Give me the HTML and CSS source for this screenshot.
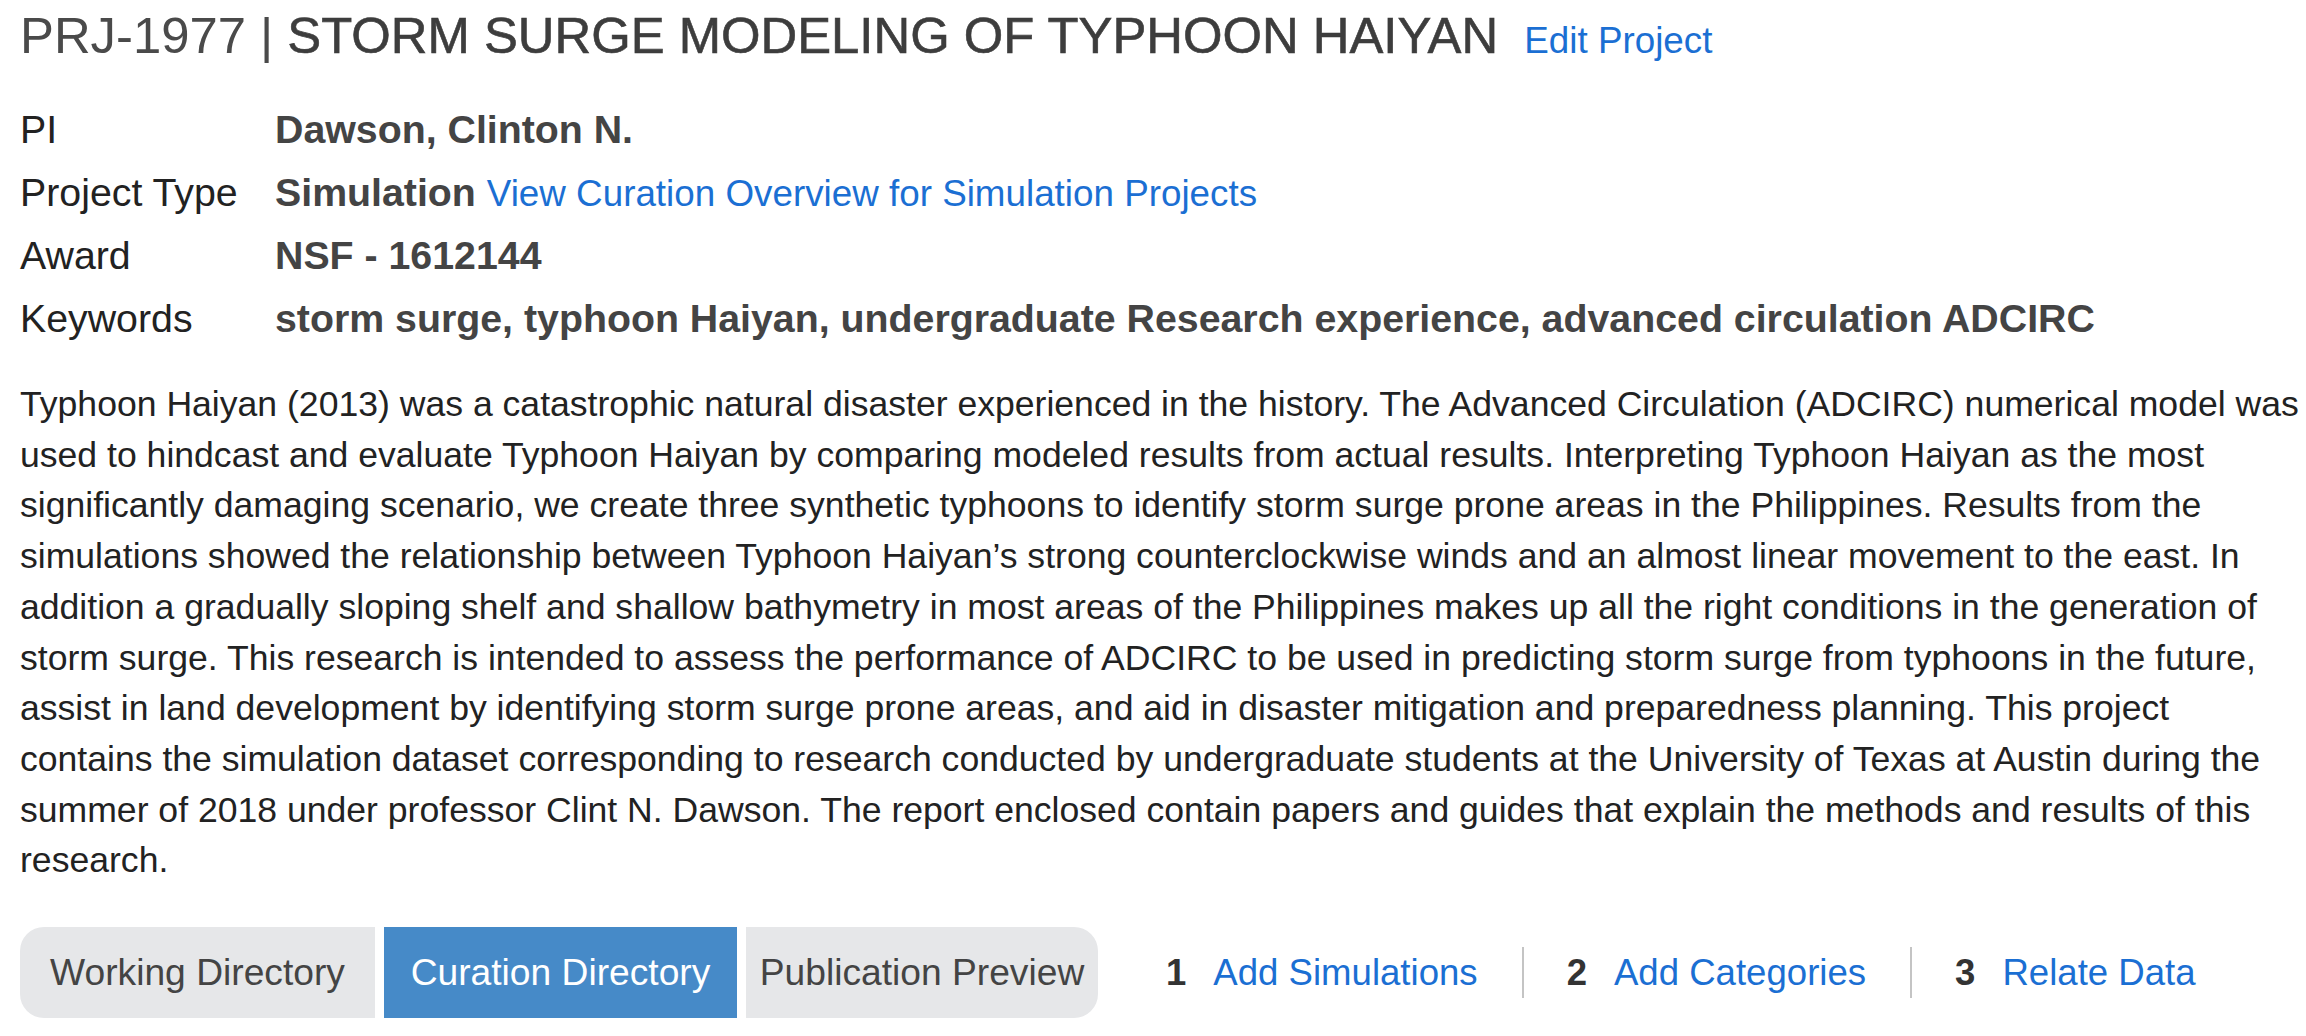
FILE: index.html
```html
<!DOCTYPE html>
<html lang="en">
<head>
    <meta charset="UTF-8">
    <meta name="viewport" content="width=device-width, initial-scale=1.0">
    <title>PRJ-1977 | Storm Surge Modeling of Typhoon Haiyan</title>
    <link rel="stylesheet" href="styles.css">
</head>
<body>
    <div class="project-page">
        <!-- Project header -->
        <h1 class="project-title">
            <span class="project-id">PRJ-1977 |</span> <span class="project-name">STORM SURGE MODELING OF TYPHOON HAIYAN</span>
            <a href="#" class="edit-link">Edit Project</a>
        </h1>

        <!-- Project metadata -->
        <div class="project-meta">
            <div class="meta-label">PI</div>
            <div class="meta-value">Dawson, Clinton N.</div>

            <div class="meta-label">Project Type</div>
            <div class="meta-value">Simulation <a href="#" class="meta-link">View Curation Overview for Simulation Projects</a></div>

            <div class="meta-label">Award</div>
            <div class="meta-value">NSF - 1612144</div>

            <div class="meta-label">Keywords</div>
            <div class="meta-value">storm surge, typhoon Haiyan, undergraduate Research experience, advanced circulation ADCIRC</div>
        </div>

        <p class="project-description">
            Typhoon Haiyan (2013) was a catastrophic natural disaster experienced in the history. The Advanced Circulation (ADCIRC) numerical model was used to hindcast and evaluate Typhoon Haiyan by comparing modeled results from actual results. Interpreting Typhoon Haiyan as the most significantly damaging scenario, we create three synthetic typhoons to identify storm surge prone areas in the Philippines. Results from the simulations showed the relationship between Typhoon Haiyan’s strong counterclockwise winds and an almost linear movement to the east. In addition a gradually sloping shelf and shallow bathymetry in most areas of the Philippines makes up all the right conditions in the generation of storm surge. This research is intended to assess the performance of ADCIRC to be used in predicting storm surge from typhoons in the future, assist in land development by identifying storm surge prone areas, and aid in disaster mitigation and preparedness planning. This project contains the simulation dataset corresponding to research conducted by undergraduate students at the University of Texas at Austin during the summer of 2018 under professor Clint N. Dawson. The report enclosed contain papers and guides that explain the methods and results of this research.
        </p>

        <!-- Directory tabs and curation steps -->
        <div class="curation-bar">
            <div class="dir-tabs">
                <a href="#" class="dir-tab">Working Directory</a>
                <a href="#" class="dir-tab active">Curation Directory</a>
                <a href="#" class="dir-tab">Publication Preview</a>
            </div>

            <div class="curation-steps">
                <div class="step">
                    <span class="step-num">1</span>
                    <a href="#" class="step-link">Add Simulations</a>
                </div>
                <div class="step">
                    <span class="step-num">2</span>
                    <a href="#" class="step-link">Add Categories</a>
                </div>
                <div class="step">
                    <span class="step-num">3</span>
                    <a href="#" class="step-link">Relate Data</a>
                </div>
            </div>
        </div>
    </div>
</body>
</html>
```

FILE: styles.css
```css
* {
    margin: 0;
    padding: 0;
    box-sizing: border-box;
}

body {
    font-family: 'Liberation Sans', Arial, Helvetica, sans-serif;
    background: #fff;
    color: #222;
}

a {
    color: #1b6fd3;
    text-decoration: none;
}

.project-page {
    padding: 6px 6px 0 20px;
}

.project-title {
    font-size: 50.8px;
    line-height: 60px;
    font-weight: normal;
    color: #444;
    white-space: nowrap;
}

.project-id {
    color: #4a4a4a;
}

.project-name {
    color: #3d3d3d;
    -webkit-text-stroke: 0.6px #3d3d3d;
}

.edit-link {
    font-size: 36.8px;
    margin-left: 12px;
}

.project-meta {
    display: grid;
    grid-template-columns: 255px auto;
    grid-auto-rows: 63px;
    margin-top: 27px;
    font-size: 39.3px;
    line-height: 63px;
}

.meta-label {
    color: #222;
}

.meta-value {
    color: #444;
    font-weight: bold;
    white-space: nowrap;
}

.meta-link {
    font-weight: normal;
    font-size: 36.8px;
}

.project-description {
    margin-top: 29px;
    font-size: 35.6px;
    line-height: 50.7px;
    color: #222;
}

.curation-bar {
    display: flex;
    align-items: center;
    margin-top: 41px;
}

.dir-tabs {
    display: flex;
    gap: 9px;
}

.dir-tab {
    width: 355px;
    height: 91px;
    display: flex;
    align-items: center;
    justify-content: center;
    background: #e6e7e9;
    color: #444;
    font-size: 37.2px;
}

.dir-tab:first-child {
    border-radius: 24px 0 0 24px;
}

.dir-tab:last-child {
    width: 352px;
    border-radius: 0 24px 24px 0;
}

.dir-tab.active {
    width: 353px;
    background: #468ac8;
    color: #fff;
}

.curation-steps {
    display: flex;
    align-items: center;
    margin-left: 68px;
}

.step {
    display: flex;
    align-items: center;
    gap: 27px;
    padding: 0 44px 0 43px;
    line-height: 51px;
    border-left: 2px solid #c4c4c4;
}

.step:first-child {
    padding-left: 0;
    border-left: none;
}

.step-num {
    font-size: 36.5px;
    font-weight: bold;
    color: #333;
}

.step-link {
    font-size: 36.6px;
}
```
